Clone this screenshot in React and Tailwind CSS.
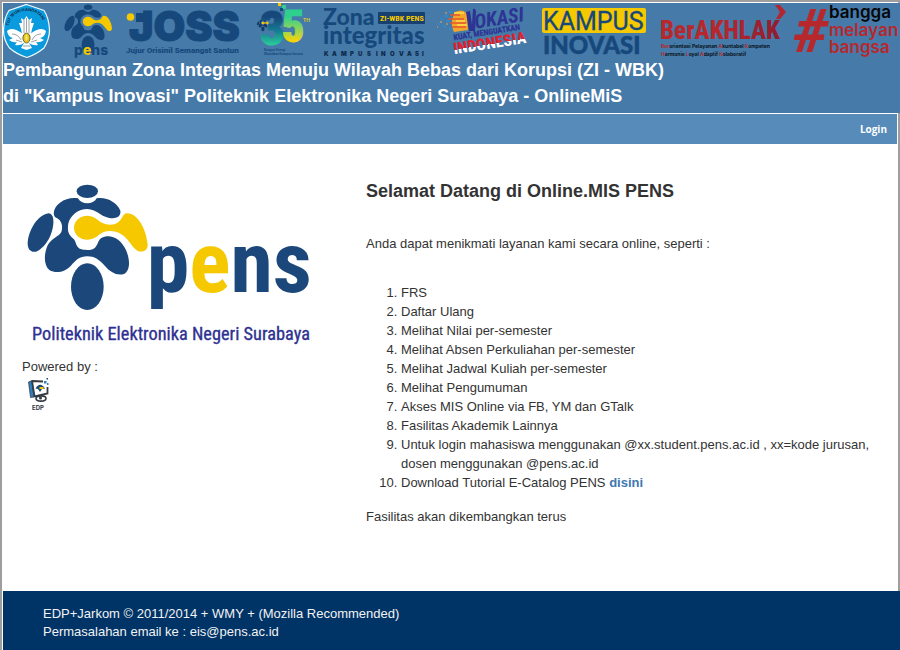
import React from "react";

const NAVY = "#17487c";
const YELLOW = "#f5c800";
const NARROW = "'Roboto Condensed', Roboto, sans-serif";
const ROBOTO = "Roboto, sans-serif";
const LATO = "Lato, sans-serif";
const INTER = "Inter, sans-serif";

function PensMark({ navy = "#1b477a", yellow = YELLOW }) {
  return (
    <g>
      <ellipse cx="262" cy="64" rx="32" ry="20" fill={navy} />
      <path
        fill={navy}
        d="M234 85C244 105 280 105 290 85C320 80 352 98 361 122C364 142 345 148 325 143C300 138 290 118 262 117C235 117 212 135 205 160C201 185 206 195 222 208C232 222 225 240 262 240C297 240 288 215 304 204C330 190 362 205 378 240C390 268 392 300 372 312C350 318 330 306 315 288C296 268 284 259 262 259C238 259 228 270 212 288C196 306 168 312 148 300C130 285 132 250 143 226C152 207 176 200 184 186C190 168 184 150 170 144C155 138 160 112 180 98C196 86 215 82 234 85Z"
      />
      <path fill={navy} d="M146 130C162 132 162 155 158 175C152 205 132 236 108 245C90 248 82 236 83 216C86 182 112 134 146 130Z" />
      <ellipse cx="262" cy="350" rx="49" ry="70" fill={navy} />
      <path
        fill={yellow}
        d="M262 137C292 137 296 164 330 164C368 164 362 134 380 130C412 128 440 178 443 225C443 240 430 250 412 242C388 226 380 184 330 183C296 183 294 209 262 209C238 209 222 192 222 173C222 152 240 137 262 137Z"
      />
    </g>
  );
}

function Emblem() {
  return (
    <svg className="shrink-0 overflow-visible" width="64" height="56" viewBox="3 3 64 56" role="img" aria-label="Tut Wuri Handayani">
      <path d="M26.500 4.500L44 10.500Q49 18 49.500 30Q49.500 39 44 48Q36 54.500 27 57.500Q17 54.500 9.500 48Q3.500 40 3.500 30Q4 18 9 10.500Z" fill="#0a9ade" stroke="#f4fafc" strokeWidth="1.200" />
      <path id="emblem-arc" d="M8.500 26Q12 11 26.500 11Q41 11 45 26" fill="none" />
      <text fontFamily={INTER} fontSize="4" fontWeight="700" fill="#132c4c">
        <textPath href="#emblem-arc">TUT WURI HANDAYANI</textPath>
      </text>
      <path d="M26.500 16L29 20L32 18L31 23L34 23L32 29L31 34L22 34L21 29L19 23L22 23L21 18L24 20Z" fill="#fff" />
      <path d="M23 34Q12 26 7 31Q8 37 13 38L9 40Q13 43 17 42L15 45Q20 46 24 43L21 48L26.500 50L32 48L29 43Q33 46 38 45L36 42Q40 43 44 40L40 38Q45 37 46 31Q41 26 30 34Z" fill="#fff" />
      <path d="M12 34Q18 34 21 40M16 40L22 42M41 34Q35 34 32 40M37 40L31 42M24 20V33M29 20V33M26.500 18V32M23 46H30" stroke="#56616c" strokeWidth="0.600" fill="none" />
      <ellipse cx="26.500" cy="38" rx="3.600" ry="5" fill="#e8c31b" stroke="#4a4d30" strokeWidth="0.800" />
      <path d="M26.500 34Q29 38 26.500 41Q24 38 26.500 34Z" fill="#f9ea5a" />
    </svg>
  );
}

function PensSmall() {
  return (
    <svg className="shrink-0 overflow-visible" width="56" height="56" viewBox="67 3 56 56" role="img" aria-label="PENS">
      <g transform="translate(53.500 -1.300) scale(0.132)">
        <PensMark navy={NAVY} />
      </g>
      <text x="74" y="55" fontFamily={INTER} fontSize="14" fontWeight="800" fill={NAVY}>
        p<tspan fill={YELLOW}>e</tspan>ns
      </text>
    </svg>
  );
}

function Joss() {
  return (
    <svg className="shrink-0 overflow-visible" width="129" height="56" viewBox="123 3 129 56" role="img" aria-label="JOSS">
      <rect x="136" y="13" width="12" height="9" fill={NAVY} />
      <circle cx="130.500" cy="17" r="3.800" fill={YELLOW} />
      <text x="129" y="41" fontFamily={INTER} fontSize="41" fontWeight="900" fill={NAVY} stroke={NAVY} strokeWidth="1">JOSS</text>
      <text x="126" y="53" fontFamily={ROBOTO} fontSize="8" fontWeight="900" fill={NAVY}>Jujur Orisinil Semangat Santun</text>
    </svg>
  );
}

function Anniversary() {
  return (
    <svg className="shrink-0 overflow-visible" width="64" height="56" viewBox="252 3 64 56" role="img" aria-label="35th">
      <defs>
        <linearGradient id="three" x1="0" y1="0" x2="0" y2="1">
          <stop offset="0.300" stopColor="#17487c" />
          <stop offset="0.550" stopColor="#167d93" />
          <stop offset="0.800" stopColor="#2bd09a" />
        </linearGradient>
        <linearGradient id="five" x1="0" y1="0" x2="0" y2="1">
          <stop offset="0.300" stopColor="#2fd08e" />
          <stop offset="0.600" stopColor="#a6d54b" />
          <stop offset="0.780" stopColor="#ffd400" />
        </linearGradient>
      </defs>
      <g transform="translate(254 17) scale(0.034)">
        <PensMark navy="#143a68" />
      </g>
      <g fontFamily={NARROW} fontSize="48" fontWeight="900">
        <text x="260" y="45" fill="url(#three)" stroke="url(#three)" strokeWidth="1">3</text>
        <text x="282" y="42" fontSize="44" fill="url(#five)" stroke="url(#five)" strokeWidth="1">5</text>
      </g>
      <rect x="278" y="3" width="3" height="3" fill={YELLOW} />
      <rect x="282" y="5" width="4" height="4" fill="#2fd08e" />
      <rect x="280" y="8" width="3" height="3" fill="#17487c" />
      <text x="303" y="22" fontFamily={INTER} fontSize="5" fontWeight="700" fill="#d9c62c">TH</text>
      <text x="264" y="51" fontFamily={INTER} fontSize="3" fontWeight="700" fill={NAVY}>Bangun Energi</text>
      <text x="264" y="55" fontFamily={INTER} fontSize="3" fontWeight="700" fill={NAVY}>Wujudkan Kampus Inovasi</text>
    </svg>
  );
}

function ZonaIntegritas() {
  return (
    <svg className="shrink-0 overflow-visible" width="120" height="56" viewBox="316 3 120 56" role="img" aria-label="Zona Integritas">
      <text x="323" y="25" fontFamily={LATO} fontSize="23" fontWeight="900" fill={NAVY}>Zona</text>
      <rect x="378" y="12" width="47" height="12" rx="1" fill="#17406e" />
      <text x="380" y="21" fontFamily={NARROW} fontSize="8" fontWeight="700" fill={YELLOW}>ZI-WBK PENS</text>
      <text x="323" y="44" fontFamily={LATO} fontSize="24" fontWeight="900" fill={NAVY}>integritas</text>
      <text y="56" x="324 332 341 350 358 367 371 376 381 390 399 407 415 422" fontFamily={INTER} fontSize="6" fontWeight="900" fill="#0e2a4c">KAMPUS INOVASI</text>
    </svg>
  );
}

function Vokasi() {
  return (
    <svg className="shrink-0 overflow-visible" width="100" height="56" viewBox="436 3 100 56" role="img" aria-label="Vokasi kuat, menguatkan Indonesia">
      <defs>
        <linearGradient id="flag" x1="0" y1="0" x2="0" y2="1">
          <stop offset="0.560" stopColor="#e3202c" />
          <stop offset="0.560" stopColor="#ffffff" />
        </linearGradient>
      </defs>
      <path d="M455 12Q463 8 467 14L468 30L454 32Q449 24 455 12Z" fill="#f4a62a" />
      <path d="M450 15H460M448 19H464M450 23H466M452 27H466" stroke="#e4572e" strokeWidth="1.500" />
      <path d="M454 13H464M456 21H465M457 25H467" stroke="#ffe04a" strokeWidth="1.500" />
      <path d="M448 12H452M444 16H448M446 21H450M441 19H443M438 24H440M443 26H446M449 29H453" stroke="#2d8fd0" strokeWidth="1.500" />
      <path d="M440 22H442M445 13H447M437 27H438M446 24H448" stroke="#f0a848" strokeWidth="1" />
      <path d="M466 12L470 11L472 25L473 9Q475 8 476 11L475 31H469Z" fill="#2d3494" />
      <g transform="rotate(-9 455 40)" fontFamily={NARROW} fontWeight="700">
        <text x="477" y="32" fontSize="20" fontStyle="italic" fill="#2d3494">OKASI</text>
        <text x="454" y="40" fontSize="8" fill="#2d3494" stroke="#2d3494" strokeWidth="0.200">KUAT, MENGUATKAN</text>
        <text x="452" y="54" fontSize="16" fontWeight="800" fill="url(#flag)">INDONESIA</text>
      </g>
    </svg>
  );
}

function KampusInovasi() {
  return (
    <svg className="shrink-0 overflow-visible" width="120" height="56" viewBox="536 3 120 56" role="img" aria-label="Kampus Inovasi">
      <rect x="542" y="8" width="104" height="25" rx="2" fill={YELLOW} />
      <text x="543" y="30" fontFamily={ROBOTO} fontSize="25" fontWeight="400" fill={NAVY} stroke={NAVY} strokeWidth="0.300">KAMPUS</text>
      <text x="543" y="54" fontFamily={LATO} fontSize="24" fontWeight="900" fill={NAVY} stroke={NAVY} strokeWidth="0.500">INOVASI</text>
    </svg>
  );
}

function Berakhlak() {
  return (
    <svg className="shrink-0 overflow-visible" width="134" height="56" viewBox="656 3 134 56" role="img" aria-label="BerAKHLAK">
      <defs>
        <linearGradient id="akhlak" x1="0" y1="0" x2="1" y2="0">
          <stop offset="0.500" stopColor="#b7282d" />
          <stop offset="1" stopColor="#8e1c30" />
        </linearGradient>
      </defs>
      <text x="660" y="39" fontFamily={NARROW} fontSize="25" fontWeight="800" fill="url(#akhlak)">BerAKHLAK</text>
      <path d="M775 5H780L786 12L780 19H776L780 12Z" fill="#b3262f" />
      <text x="661" y="48" fontFamily={INTER} fontSize="5" fontWeight="700" fill="#0a1420">
        <tspan fill="#b7282d">Ber</tspan>orientasi Pelayanan <tspan fill="#b7282d">A</tspan>kuntabel <tspan fill="#b7282d">K</tspan>ompeten
      </text>
      <text x="661" y="56" fontFamily={INTER} fontSize="5" fontWeight="700" fill="#0a1420">
        <tspan fill="#b7282d">H</tspan>armonis <tspan fill="#b7282d">L</tspan>oyal <tspan fill="#b7282d">A</tspan>daptif <tspan fill="#b7282d">K</tspan>olaboratif
      </text>
    </svg>
  );
}

function BanggaMelayani() {
  return (
    <svg className="shrink-0 overflow-visible" width="110" height="56" viewBox="790 3 110 56" role="img" aria-label="#banggamelayanibangsa">
      <text x="794" y="52" fontFamily={ROBOTO} fontSize="60" fontWeight="900" fontStyle="italic" fill="#b7282d">#</text>
      <g fontFamily={INTER} fontSize="17" fontWeight="600" fill="#b7282d">
        <text x="829" y="18" fill="#05070a">bangga</text>
        <text x="829" y="36">melayan</text>
        <text x="829" y="53">bangsa</text>
      </g>
    </svg>
  );
}

function PensLogo() {
  return (
    <svg className="block overflow-visible" width="290" height="170" viewBox="66 30 870 510" role="img" aria-label="Politeknik Elektronika Negeri Surabaya">
      <PensMark />
      <text x="440" y="366" fontFamily={NARROW} fontSize="258" fontWeight="700" fill="#1b477a">
        p<tspan fill={YELLOW}>e</tspan>ns
      </text>
      <text x="96" y="510" fontFamily={NARROW} fontSize="55" fill="#2e3192" stroke="#2e3192" strokeWidth="1">
        Politeknik Elektronika Negeri Surabaya
      </text>
    </svg>
  );
}

function EdpLogo() {
  return (
    <svg className="ml-1 block" width="26" height="36" viewBox="26 376 26 36" role="img" aria-label="EDP">
      <path d="M28.500 382L32 380.500L34 397L30.500 397.500Z" fill="#2f7fc0" stroke="#2c3440" strokeWidth="0.700" />
      <path d="M32 381L43 381.500M47.500 387V393.500L34.500 396.500L32 381" fill="none" stroke="#363b42" strokeWidth="1.800" />
      <path d="M35.500 388.500Q40 381 45 388.500L42 389L40 392L38 389Z" fill="#1b477a" />
      <path d="M39.500 387H43.500V389H39.500Z" fill={YELLOW} />
      <rect x="44" y="381" width="2.500" height="2.500" fill="#2f7fc0" />
      <rect x="46.500" y="378" width="1.500" height="1.500" fill="#1b477a" />
      <rect x="47" y="383" width="1.500" height="2" fill="#2f7fc0" />
      <ellipse cx="41" cy="398.500" rx="5" ry="2.600" fill="none" stroke="#33383f" strokeWidth="1.600" />
      <circle cx="40.500" cy="398" r="1.500" fill="#33383f" />
      <text x="32" y="410" fontFamily={INTER} fontSize="6" fontWeight="700" fill="#33383f">EDP</text>
    </svg>
  );
}

const services = [
  "FRS",
  "Daftar Ulang",
  "Melihat Nilai per-semester",
  "Melihat Absen Perkuliahan per-semester",
  "Melihat Jadwal Kuliah per-semester",
  "Melihat Pengumuman",
  "Akses MIS Online via FB, YM dan GTalk",
  "Fasilitas Akademik Lainnya",
  "Untuk login mahasiswa menggunakan @xx.student.pens.ac.id , xx=kode jurusan, dosen menggunakan @pens.ac.id",
];

export default function App() {
  return (
    <div className="flex min-h-screen flex-col border-x-2 border-t-2 border-[#9e9e9e] bg-white px-px pt-px font-['Liberation_Sans',Arial,sans-serif] text-[13px] leading-[19px] text-[#333]">
      <header className="-mr-[3px] bg-[#457aa9] pb-1">
        <div className="flex h-[54px]">
          <Emblem />
          <PensSmall />
          <Joss />
          <Anniversary />
          <ZonaIntegritas />
          <Vokasi />
          <KampusInovasi />
          <Berakhlak />
          <BanggaMelayani />
        </div>
        <h1 className="text-[18px] leading-[26px] font-bold text-white">
          Pembangunan Zona Integritas Menuju Wilayah Bebas dari Korupsi (ZI - WBK)
          <br />
          di "Kampus Inovasi" Politeknik Elektronika Negeri Surabaya - OnlineMiS
        </h1>
      </header>

      <nav className="mt-px flex h-[30px] items-center justify-end bg-[#578cba] pr-[10px]">
        <a href="#login" className="font-['Open_Sans',Verdana,sans-serif] text-[10px] font-bold text-white">Login</a>
      </nav>

      <main className="flex grow pr-5 pb-16 pl-[19px]">
        <section className="w-[344px] shrink-0 pt-9">
          <PensLogo />
          <p className="mt-[7px]">Powered by :</p>
          <EdpLogo />
        </section>
        <section className="min-w-0 flex-1 pt-9">
          <h2 className="text-[18px] leading-[22px] font-bold">Selamat Datang di Online.MIS PENS</h2>
          <p className="mt-8">Anda dapat menikmati layanan kami secara online, seperti :</p>
          <ol className="mt-[30px] list-outside list-decimal pl-[35px]">
            {services.map((item) => (
              <li key={item}>{item}</li>
            ))}
            <li>
              Download Tutorial E-Catalog PENS{" "}
              <a href="#disini" className="font-bold text-[#4078b0]">disini</a>
            </li>
          </ol>
          <p className="mt-[15px]">Fasilitas akan dikembangkan terus</p>
        </section>
      </main>

      <footer className="-mr-[3px] bg-[#003366] pt-[14px] pb-[9px] pl-10 leading-[18px] text-[#f2f2f2]">
        <p>EDP+Jarkom © 2011/2014 + WMY + (Mozilla Recommended)</p>
        <p>Permasalahan email ke : eis@pens.ac.id</p>
      </footer>
    </div>
  );
}
